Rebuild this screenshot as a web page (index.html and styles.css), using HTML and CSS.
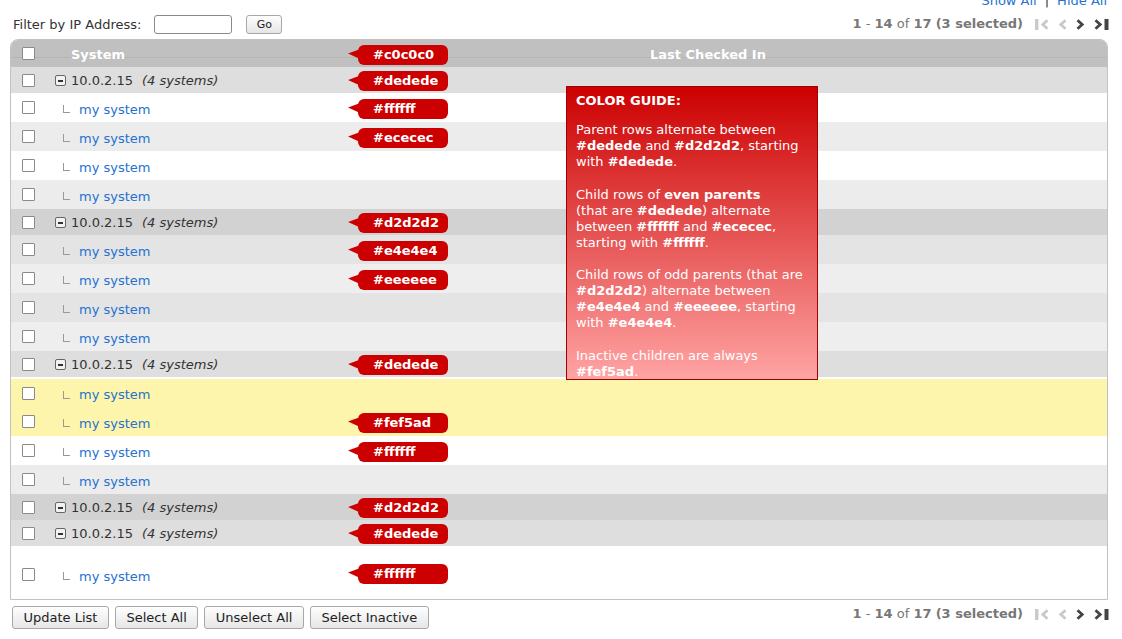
FILE: index.html
```html
<!DOCTYPE html>
<html>
<head>
<meta charset="utf-8">
<title>Systems</title>
<link rel="stylesheet" href="styles.css">
</head>
<body>
<div class="page">
  <div class="toplinks"><a class="link">Show All</a><span class="sep">|</span><a class="link">Hide All</a></div>

  <div class="toolbar">
    <form class="filter">
      <label class="filter-label">Filter by IP Address:</label>
      <input type="text" class="ip">
      <button type="button" class="btn go">Go</button>
    </form>
    <div class="pager">
      <span class="pager-text"><b>1</b> - <b>14</b> of <b>17</b> <b>(3 selected)</b></span>
      <span class="nav">
        <svg class="ico off" width="14" height="11" viewBox="0 0 14 11"><rect x="0" y="0" width="3.4" height="11"/><polyline points="12.5,1.2 7.8,5.5 12.5,9.8"/></svg>
        <svg class="ico off" width="9" height="11" viewBox="0 0 9 11"><polyline points="7.5,1.2 2.8,5.5 7.5,9.8"/></svg>
        <svg class="ico on" width="9" height="11" viewBox="0 0 9 11"><polyline points="1.5,1.2 6.2,5.5 1.5,9.8"/></svg>
        <svg class="ico on" width="16" height="11" viewBox="0 0 16 11"><polyline points="1.5,1.2 6.2,5.5 1.5,9.8"/><rect x="10.5" y="0" width="4" height="11"/></svg>
      </span>
    </div>
  </div>

  <div class="table">
    <div class="row head">
      <span class="cell check"><input type="checkbox"></span>
      <span class="cell sys head-sys">System</span>
      <span class="cell last">Last Checked In</span>
      <span class="badge">#c0c0c0</span>
    </div>

    <div class="row parent p-even">
      <span class="cell check"><input type="checkbox"></span>
      <span class="cell sys"><span class="toggle"></span>10.0.2.15<i class="count">(4 systems)</i></span>
      <span class="cell last"></span>
      <span class="badge">#dedede</span>
    </div>
    <div class="row child c-white">
      <span class="cell check"><input type="checkbox"></span>
      <span class="cell sys"><span class="elbow"></span><a class="link">my system</a></span>
      <span class="cell last"></span>
      <span class="badge">#ffffff</span>
    </div>
    <div class="row child c-ec">
      <span class="cell check"><input type="checkbox"></span>
      <span class="cell sys"><span class="elbow"></span><a class="link">my system</a></span>
      <span class="cell last"></span>
      <span class="badge">#ececec</span>
    </div>
    <div class="row child c-white">
      <span class="cell check"><input type="checkbox"></span>
      <span class="cell sys"><span class="elbow"></span><a class="link">my system</a></span>
      <span class="cell last"></span>
    </div>
    <div class="row child c-ec">
      <span class="cell check"><input type="checkbox"></span>
      <span class="cell sys"><span class="elbow"></span><a class="link">my system</a></span>
      <span class="cell last"></span>
    </div>

    <div class="row parent p-odd">
      <span class="cell check"><input type="checkbox"></span>
      <span class="cell sys"><span class="toggle"></span>10.0.2.15<i class="count">(4 systems)</i></span>
      <span class="cell last"></span>
      <span class="badge">#d2d2d2</span>
    </div>
    <div class="row child c-e4">
      <span class="cell check"><input type="checkbox"></span>
      <span class="cell sys"><span class="elbow"></span><a class="link">my system</a></span>
      <span class="cell last"></span>
      <span class="badge">#e4e4e4</span>
    </div>
    <div class="row child c-ee">
      <span class="cell check"><input type="checkbox"></span>
      <span class="cell sys"><span class="elbow"></span><a class="link">my system</a></span>
      <span class="cell last"></span>
      <span class="badge">#eeeeee</span>
    </div>
    <div class="row child c-e4">
      <span class="cell check"><input type="checkbox"></span>
      <span class="cell sys"><span class="elbow"></span><a class="link">my system</a></span>
      <span class="cell last"></span>
    </div>
    <div class="row child c-ee">
      <span class="cell check"><input type="checkbox"></span>
      <span class="cell sys"><span class="elbow"></span><a class="link">my system</a></span>
      <span class="cell last"></span>
    </div>

    <div class="row parent p-even">
      <span class="cell check"><input type="checkbox"></span>
      <span class="cell sys"><span class="toggle"></span>10.0.2.15<i class="count">(4 systems)</i></span>
      <span class="cell last"></span>
      <span class="badge">#dedede</span>
    </div>
    <div class="row child inactive first-inactive">
      <span class="cell check"><input type="checkbox"></span>
      <span class="cell sys"><span class="elbow"></span><a class="link">my system</a></span>
      <span class="cell last"></span>
    </div>
    <div class="row child inactive">
      <span class="cell check"><input type="checkbox"></span>
      <span class="cell sys"><span class="elbow"></span><a class="link">my system</a></span>
      <span class="cell last"></span>
      <span class="badge">#fef5ad</span>
    </div>
    <div class="row child c-white">
      <span class="cell check"><input type="checkbox"></span>
      <span class="cell sys"><span class="elbow"></span><a class="link">my system</a></span>
      <span class="cell last"></span>
      <span class="badge">#ffffff</span>
    </div>
    <div class="row child c-ec">
      <span class="cell check"><input type="checkbox"></span>
      <span class="cell sys"><span class="elbow"></span><a class="link">my system</a></span>
      <span class="cell last"></span>
    </div>

    <div class="row parent p-odd">
      <span class="cell check"><input type="checkbox"></span>
      <span class="cell sys"><span class="toggle"></span>10.0.2.15<i class="count">(4 systems)</i></span>
      <span class="cell last"></span>
      <span class="badge">#d2d2d2</span>
    </div>
    <div class="row parent p-even">
      <span class="cell check"><input type="checkbox"></span>
      <span class="cell sys"><span class="toggle"></span>10.0.2.15<i class="count">(4 systems)</i></span>
      <span class="cell last"></span>
      <span class="badge">#dedede</span>
    </div>
    <div class="row child c-white tall">
      <span class="cell check"><input type="checkbox"></span>
      <span class="cell sys"><span class="elbow"></span><a class="link">my system</a></span>
      <span class="cell last"></span>
      <span class="badge">#ffffff</span>
    </div>

    <div class="guide">
      <h4 class="guide-title">COLOR GUIDE:</h4>
      <p>Parent rows alternate between <b>#dedede</b> and <b>#d2d2d2</b>, starting with <b>#dedede</b>.</p>
      <p>Child rows of <b>even parents</b><br>(that are <b>#dedede</b>) alternate between <b>#ffffff</b> and <b>#ececec</b>, starting with <b>#ffffff</b>.</p>
      <p>Child rows of odd parents (that are <b>#d2d2d2</b>) alternate between <b>#e4e4e4</b> and <b>#eeeeee</b>, starting with <b>#e4e4e4</b>.</p>
      <p>Inactive children are always <b>#fef5ad</b>.</p>
    </div>
  </div>

  <div class="footer">
    <div class="btns">
      <button type="button" class="btn">Update List</button>
      <button type="button" class="btn">Select All</button>
      <button type="button" class="btn">Unselect All</button>
      <button type="button" class="btn">Select Inactive</button>
    </div>
    <div class="pager">
      <span class="pager-text"><b>1</b> - <b>14</b> of <b>17</b> <b>(3 selected)</b></span>
      <span class="nav">
        <svg class="ico off" width="14" height="11" viewBox="0 0 14 11"><rect x="0" y="0" width="3.4" height="11"/><polyline points="12.5,1.2 7.8,5.5 12.5,9.8"/></svg>
        <svg class="ico off" width="9" height="11" viewBox="0 0 9 11"><polyline points="7.5,1.2 2.8,5.5 7.5,9.8"/></svg>
        <svg class="ico on" width="9" height="11" viewBox="0 0 9 11"><polyline points="1.5,1.2 6.2,5.5 1.5,9.8"/></svg>
        <svg class="ico on" width="16" height="11" viewBox="0 0 16 11"><polyline points="1.5,1.2 6.2,5.5 1.5,9.8"/><rect x="10.5" y="0" width="4" height="11"/></svg>
      </span>
    </div>
  </div>
</div>
</body>
</html>
```

FILE: styles.css
```css
* { box-sizing: border-box; }

body {
  margin: 0;
  font-family: "DejaVu Sans", "Liberation Sans", sans-serif;
  font-size: 13px;
  color: #333;
  background: #fff;
}

.page {
  display: flow-root;
  padding: 0 12px 0 10px;
}

.link {
  color: #2572d0;
  text-decoration: none;
  cursor: pointer;
}

/* top links */
.toplinks {
  display: flex;
  justify-content: flex-end;
  align-items: center;
  height: 16px;
  line-height: 16px;
  margin-top: -7px;
  padding-right: 3px;
}
.sep { margin: 0 8px; color: #333; }

/* toolbar */
.toolbar {
  display: flex;
  justify-content: space-between;
  align-items: center;
  height: 30px;
}
.filter {
  display: flex;
  align-items: center;
  margin: 0 0 0 3px;
}
.filter-label { color: #333; }
.ip {
  width: 78px;
  height: 19px;
  margin-left: 13px;
  border: 1px solid #8a8a8a;
  border-radius: 3px;
  background: #fff;
  padding: 0 3px;
}

.btn {
  height: 23px;
  padding: 0 10.5px;
  font-family: "DejaVu Sans", sans-serif;
  font-size: 13px;
  color: #222;
  border: 1px solid #a8a8a8;
  border-radius: 3px;
  background: linear-gradient(#fefefe, #e6e6e6);
}
.btn.go {
  margin-left: 14px;
  width: 36px;
  height: 19px;
  padding: 0;
  font-size: 11px;
}

/* pager */
.pager {
  display: flex;
  align-items: center;
  color: #777;
  line-height: 16px;
}
.pager b { font-weight: bold; }
.nav {
  display: flex;
  align-items: center;
  gap: 9px;
  margin-left: 12px;
}
.ico polyline {
  fill: none;
  stroke-width: 2.8;
  stroke-linecap: butt;
  stroke-linejoin: miter;
}
.ico.off rect { fill: #cacaca; }
.ico.off polyline { stroke: #cacaca; }
.ico.on rect { fill: #444; }
.ico.on polyline { stroke: #444; }

/* table */
.table {
  position: relative;
  margin-right: 2px;
  border: 1px solid #c2c2c2;
  border-radius: 8px 8px 0 0;
  background: #fff;
}

.row {
  position: relative;
  display: grid;
  grid-template-columns: 44px 254px 1fr;
  align-items: center;
  height: 29px;
}
.cell { display: flex; align-items: center; }
.check { padding-left: 11px; }
.last { justify-content: center; }

input[type="checkbox"] {
  appearance: none;
  -webkit-appearance: none;
  width: 13px;
  height: 13px;
  margin: 0;
  border: 1px solid #8a8a8a;
  border-radius: 1px;
  background: #fff;
}

.head {
  height: 27px;
  border-radius: 7px 7px 0 0;
  background: linear-gradient(#c0c0c0 0, #c0c0c0 17px, #b6b6ad 17px, #b6b6ad 18px, #c0c0c0 18px);
  color: #fff;
  font-weight: bold;
}
.head-sys, .head .last { padding-top: 2px; }
.head-sys { padding-left: 16px; }

.parent { height: 26px; color: #333; }
.parent .sys { padding-top: 1px; }
.p-even { background: #dedede; }
.p-odd { background: #d2d2d2; }

.toggle {
  display: inline-flex;
  align-items: center;
  justify-content: center;
  width: 11px;
  height: 11px;
  margin-right: 5px;
  border: 1px solid #666;
  border-radius: 2px;
  background: #f2f2f2;
}
.toggle::before {
  content: "";
  width: 5px;
  height: 2px;
  background: #333;
}
.count { margin-left: 9px; font-style: italic; }

.child .sys { padding-top: 3px; }
.c-white { background: #ffffff; }
.c-ec { background: #ececec; }
.c-e4 { background: #e4e4e4; }
.c-ee { background: #eeeeee; }
.inactive { background: #fef5ad; }
.first-inactive { border-top: 2px solid #fff; height: 30px; }
.tall { height: 53px; padding-top: 4px; }

.elbow {
  display: inline-block;
  width: 7px;
  height: 8px;
  margin: 0 9px 0 8px;
  border-left: 1px solid #999;
  border-bottom: 1px solid #999;
}

/* colour annotations */
.badge {
  position: absolute;
  left: 347px;
  top: calc(50% - 9px);
  width: 90px;
  height: 20px;
  padding-left: 15px;
  border-radius: 6px;
  background: #cc0000;
  color: #fff;
  font-weight: bold;
  line-height: 20px;
}
.badge::before {
  content: "";
  position: absolute;
  left: -10px;
  top: 5px;
  width: 11px;
  height: 9px;
  background: #cc0000;
  clip-path: polygon(0 45%, 100% 0, 100% 100%);
}

.guide {
  position: absolute;
  left: 555px;
  top: 46px;
  width: 252px;
  height: 294px;
  padding: 6px 9px 0 9px;
  border: 1px solid #a00000;
  background: linear-gradient(#cc0000, #ffa4a4);
  color: #fff;
  line-height: 16px;
}
.guide-title {
  margin: 0 0 13px;
  font-size: 13px;
  font-weight: bold;
}
.guide p { margin: 0 0 16.5px; }

/* footer */
.footer {
  display: flex;
  justify-content: space-between;
  align-items: flex-start;
  margin-top: 6px;
}
.btns {
  display: flex;
  gap: 6px;
  margin-left: 2px;
}
```
